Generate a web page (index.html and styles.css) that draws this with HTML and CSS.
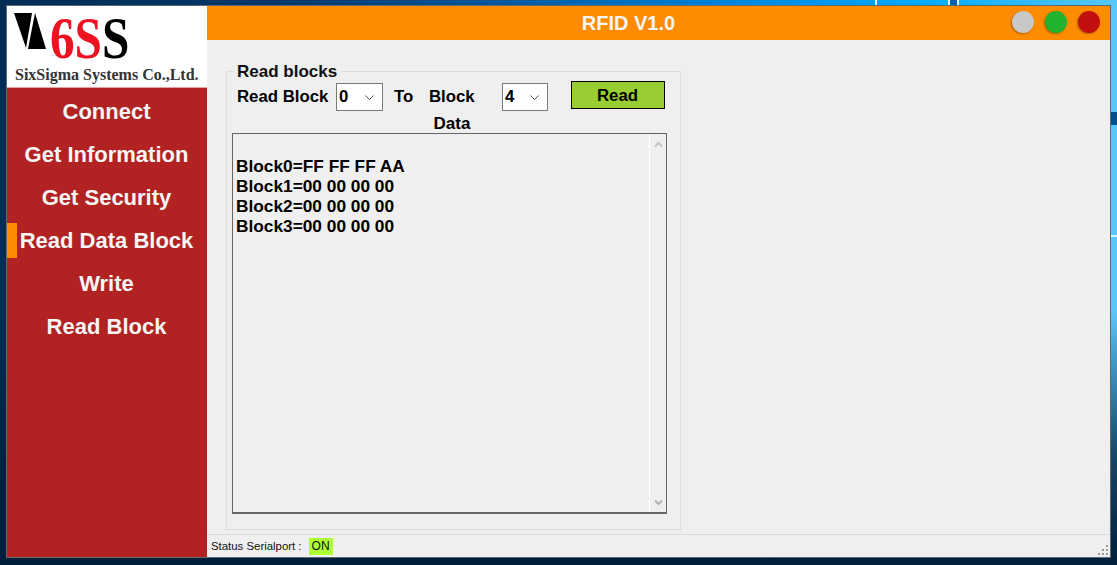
FILE: index.html
```html
<!DOCTYPE html>
<html lang="en">
<head>
    <meta charset="UTF-8">
    <title>RFID V1.0</title>
    <link rel="stylesheet" href="styles.css">
</head>
<body>

<div class="window">
    <div class="sidebar">
        <div class="logo">
            <div class="logo-mark">
                <svg class="logo-tri" width="33" height="38" viewBox="0 0 33 38">
                    <polygon points="0,1 18,1 12,36" fill="#000"/>
                    <polygon points="21,1 32,37 14,37" fill="#000"/>
                </svg>
                <div class="logo-big"><span class="logo-red">6S</span><span class="logo-black">S</span></div>
            </div>
            <div class="logo-name">SixSigma Systems Co.,Ltd.</div>
        </div>
        <div class="menu">
            <div class="menu-item">Connect</div>
            <div class="menu-item">Get Information</div>
            <div class="menu-item">Get Security</div>
            <div class="menu-item active">Read Data Block</div>
            <div class="menu-item">Write</div>
            <div class="menu-item">Read Block</div>
        </div>
    </div>

    <div class="main">
        <div class="titlebar">
            <div class="title">RFID V1.0</div>
            <div class="win-buttons">
                <span class="win-btn grey"></span>
                <span class="win-btn green"></span>
                <span class="win-btn red"></span>
            </div>
        </div>

        <div class="content">
            <fieldset class="group">
                <legend>Read blocks</legend>
                <div class="read-row">
                    <span class="lbl-read">Read Block</span>
                    <div class="combo"><span>0</span>
                        <svg width="9" height="5" viewBox="0 0 9 5"><path d="M0.5 0.5 L4.5 4.5 L8.5 0.5" fill="none" stroke="#555"/></svg>
                    </div>
                    <span class="lbl-to">To</span>
                    <span class="lbl-block">Block</span>
                    <div class="combo combo-end"><span>4</span>
                        <svg width="9" height="5" viewBox="0 0 9 5"><path d="M0.5 0.5 L4.5 4.5 L8.5 0.5" fill="none" stroke="#555"/></svg>
                    </div>
                    <button class="read-btn">Read</button>
                </div>
                <div class="data-label">Data</div>
                <div class="data-box">
                    <div class="data-text">
                        <div>Block0=FF FF FF AA</div>
                        <div>Block1=00 00 00 00</div>
                        <div>Block2=00 00 00 00</div>
                        <div>Block3=00 00 00 00</div>
                    </div>
                    <div class="scrollbar">
                        <svg width="9" height="7" viewBox="0 0 9 7"><path d="M1 5.5 L4.5 2 L8 5.5" fill="none" stroke="#c4c4c4" stroke-width="2"/></svg>
                        <svg width="9" height="7" viewBox="0 0 9 7"><path d="M1 1.5 L4.5 5 L8 1.5" fill="none" stroke="#b4b4b4" stroke-width="2"/></svg>
                    </div>
                </div>
            </fieldset>
        </div>

        <div class="statusbar">
            <span>Status Serialport :</span>
            <span class="status-on">ON</span>
            <svg class="grip" width="12" height="12" viewBox="0 0 12 12" fill="#999">
                <rect x="9" y="0" width="2" height="2"/>
                <rect x="5" y="4" width="2" height="2"/><rect x="9" y="4" width="2" height="2"/>
                <rect x="1" y="8" width="2" height="2"/><rect x="5" y="8" width="2" height="2"/><rect x="9" y="8" width="2" height="2"/>
            </svg>
        </div>
    </div>
</div>

</body>
</html>
```

FILE: styles.css
```css
html, body {
    height: 100%;
}
body {
    margin: 0;
    overflow: hidden;
    font-family: "Liberation Sans", Arial, sans-serif;
    /* desktop wallpaper: streaks first, then the dark fade, then the blue sweep */
    background:
        linear-gradient(#d8f2ff, #d8f2ff) 875px 0 / 2px 5px no-repeat,
        linear-gradient(#d8f2ff, #d8f2ff) 948px 0 / 2px 5px no-repeat,
        linear-gradient(#0a5fb4, #0a5fb4) 950px 0 / 7px 5px no-repeat,
        linear-gradient(#d8f2ff, #d8f2ff) 957px 0 / 2px 5px no-repeat,
        linear-gradient(#02508c, #02508c) 1110px 112px / 7px 13px no-repeat,
        linear-gradient(#d8f2ff, #d8f2ff) 1110px 235px / 7px 2px no-repeat,
        linear-gradient(to bottom, rgba(1, 30, 58, 0) 55%, rgba(1, 30, 58, 0.75) 80%, #011e3a 100%),
        linear-gradient(to right, #012c54 0, #02386a 25%, #02589c 45%, #0084dc 65%, #00aaf8 82%, #58c8fa 100%);
}
.window {
    box-sizing: border-box;
    width: 1105px;
    height: 553px;
    margin: 5px 0 0 6px;
    display: flex;
    border: 1px solid #5f6a70;
    background: #efefef;
}
.sidebar {
    width: 200px;
    flex: none;
    background: #b22222;
}
.logo {
    box-sizing: border-box;
    height: 82px;
    padding: 6px 0 0 8px;
    background: #fff;
    border-bottom: 1px solid #e8a0a0;
}
.logo-mark {
    display: flex;
    align-items: flex-start;
    height: 51px;
}
.logo-tri {
    flex: none;
    margin-left: -1px;
}
.logo-big {
    margin: 1px 0 0 3px;
    font-family: "Liberation Serif", serif;
    font-weight: bold;
    font-size: 60px;
    line-height: 50px;
    white-space: nowrap;
    transform: scaleX(0.82);
    transform-origin: left top;
}
.logo-red {
    color: #ee1122;
}
.logo-black {
    color: #000;
}
.logo-name {
    margin-top: 3px;
    font-family: "Liberation Serif", serif;
    font-weight: bold;
    font-size: 16px;
    color: #333;
    white-space: nowrap;
}
.menu {
    padding-top: 6px;
    display: flex;
    flex-direction: column;
    gap: 8px;
}
.menu-item {
    height: 35px;
    padding-right: 1px;
    line-height: 35px;
    text-align: center;
    color: #f5f5f5;
    font-size: 22px;
    font-weight: bold;
}
.menu-item.active {
    box-shadow: inset 10px 0 0 #ff8c00;
}
.main {
    flex: 1;
    display: flex;
    flex-direction: column;
    min-width: 0;
}
.titlebar {
    height: 34px;
    flex: none;
    display: flex;
    align-items: center;
    background: #ff8c00;
    position: relative;
}
.title {
    flex: 1;
    padding-right: 60px;
    text-align: center;
    color: #f5f5f5;
    font-size: 20px;
    font-weight: bold;
}
.win-buttons {
    position: absolute;
    right: 10px;
    top: 5px;
    display: flex;
    gap: 11px;
}
.win-btn {
    width: 22px;
    height: 22px;
    border-radius: 50%;
    box-shadow: -1px 1px 2px rgba(120, 70, 0, 0.6);
}
.win-btn.grey {
    background: #c8c8c8;
}
.win-btn.green {
    background: #22b32e;
}
.win-btn.red {
    background: #c20e0e;
}
.content {
    flex: 1;
    padding: 21px 0 0 19px;
    min-height: 0;
}
.group {
    box-sizing: border-box;
    width: 455px;
    height: 469px;
    margin: 0;
    padding: 0 0 0 5px;
    border: 1px solid #dcdcdc;
}
.group legend {
    margin-left: 1px;
    padding: 2px 4px 0 4px;
    font-size: 17px;
    line-height: 18px;
    font-weight: bold;
    color: #111;
}
.read-row {
    box-sizing: border-box;
    display: flex;
    align-items: flex-start;
    height: 34px;
    padding-top: 1px;
    font-size: 16.8px;
    font-weight: bold;
    color: #000;
}
.read-row > span {
    line-height: 28px;
    margin-top: 1px;
}
.lbl-read {
    margin-left: 5px;
    width: 99px;
}
.lbl-to {
    margin-left: 11px;
    width: 35px;
}
.lbl-block {
    width: 73px;
}
.combo {
    box-sizing: border-box;
    width: 47px;
    height: 28px;
    margin-top: 1px;
    padding: 0 8px 0 2px;
    display: flex;
    align-items: center;
    justify-content: space-between;
    background: #fff;
    border: 1px solid #7a7a7a;
}
.combo-end {
    width: 46px;
}
.read-btn {
    box-sizing: border-box;
    width: 94px;
    height: 28px;
    margin-left: 23px;
    margin-top: -1px;
    padding: 1px 1px 0 0;
    background: #9acd32;
    border: 1px solid #000;
    font: inherit;
    color: #000;
}
.data-label {
    width: 440px;
    margin-top: -1px;
    text-align: center;
    line-height: 20px;
    font-size: 17px;
    font-weight: bold;
    color: #000;
}
.data-box {
    box-sizing: border-box;
    width: 435px;
    height: 381px;
    margin-top: -1px;
    display: flex;
    border: 1px solid #666;
    border-bottom-width: 2px;
}
.data-text {
    flex: 1;
    padding: 22px 0 0 3px;
    font-size: 17.3px;
    font-weight: bold;
    line-height: 20px;
    color: #000;
}
.scrollbar {
    width: 17px;
    flex: none;
    display: flex;
    flex-direction: column;
    justify-content: space-between;
    align-items: center;
    padding: 7px 0 6px;
    box-sizing: border-box;
    border-left: 1px solid #fff;
}
.statusbar {
    box-sizing: border-box;
    height: 23px;
    flex: none;
    display: flex;
    align-items: center;
    padding: 0 0 0 4px;
    border-top: 1px solid #dcdcdc;
    font-size: 11.4px;
    color: #111;
    position: relative;
}
.status-on {
    margin-left: 7px;
    padding: 0 3px;
    height: 17px;
    line-height: 17px;
    font-size: 12px;
    background: #adff2f;
}
.grip {
    position: absolute;
    right: 1px;
    bottom: 0;
}
```
